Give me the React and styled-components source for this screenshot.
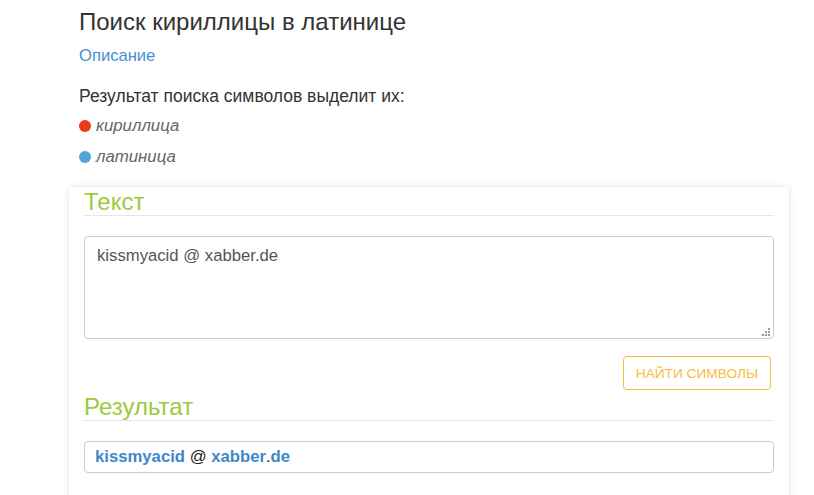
import React from "react";
import styled, { createGlobalStyle } from "styled-components";

const GlobalStyle = createGlobalStyle`
  body {
    margin: 0;
    background: #fff;
    font-family: "Liberation Sans", Arial, sans-serif;
    color: #333;
  }
`;

const App = () => {
  const result = [
    { text: "kissmyacid", latin: true },
    { text: " @ " },
    { text: "xabber", latin: true },
    { text: "." },
    { text: "de", latin: true },
  ];

  return (
    <Page>
      <GlobalStyle />
      <Intro>
        <Title>Поиск кириллицы в латинице</Title>
        <DescLink href="#">Описание</DescLink>
        <Lead>Результат поиска символов выделит их:</Lead>
        <Legend>
          <LegendItem>
            <Dot color="#ea3a1c" />
            кириллица
          </LegendItem>
          <LegendItem>
            <Dot color="#4fa4dd" />
            латиница
          </LegendItem>
        </Legend>
      </Intro>

      <Card>
        <SectionTitle>Текст</SectionTitle>
        <TextWrap>
          <TextArea defaultValue="kissmyacid @ xabber.de" />
        </TextWrap>
        <Actions>
          <FindButton>Найти символы</FindButton>
        </Actions>
        <SectionTitle>Результат</SectionTitle>
        <ResultBox>
          {result.map((part, i) =>
            part.latin ? <Latin key={i}>{part.text}</Latin> : <span key={i}>{part.text}</span>
          )}
        </ResultBox>
      </Card>
    </Page>
  );
};

const Page = styled.div`
  width: 720px;
  margin-left: 69px;
`;

const Intro = styled.div`
  padding: 8px 10px 0;
`;

const Title = styled.h1`
  margin: 0;
  font-size: 24px;
  font-weight: 400;
  line-height: 28px;
  color: #333;
`;

const DescLink = styled.a`
  display: inline-block;
  margin-top: 10px;
  font-size: 16.6px;
  line-height: 20px;
  color: #4a8fd3;
  text-decoration: none;
`;

const Lead = styled.p`
  margin: 19px 0 0;
  font-size: 17.5px;
  line-height: 22px;
`;

const Legend = styled.ul`
  list-style: none;
  margin: 8px 0 0;
  padding: 0;
  display: flex;
  flex-direction: column;
  gap: 9px;
`;

const LegendItem = styled.li`
  display: flex;
  align-items: center;
  gap: 5px;
  font-size: 16.8px;
  line-height: 22px;
  font-style: italic;
  color: #666;
`;

const Dot = styled.span`
  width: 12px;
  height: 12px;
  border-radius: 50%;
  background: ${(p) => p.color};
`;

const Card = styled.div`
  margin-top: 19px;
  background: #fff;
  padding: 0 15px 30px;
  box-shadow: 0 0 6px rgba(0, 0, 0, 0.12);
`;

const SectionTitle = styled.h2`
  margin: 0 0 20px;
  padding-top: 1px;
  font-size: 24px;
  font-weight: 400;
  line-height: 27px;
  color: #9dc93c;
  border-bottom: 1px solid #e5e5e5;
`;

const TextWrap = styled.div`
  position: relative;

  &::after {
    content: "";
    position: absolute;
    right: 4px;
    bottom: 3px;
    width: 8px;
    height: 8px;
    pointer-events: none;
    background:
      linear-gradient(#999, #999) 6px 0 / 2px 2px no-repeat,
      linear-gradient(#999, #999) 3px 3px / 2px 2px no-repeat,
      linear-gradient(#999, #999) 6px 3px / 2px 2px no-repeat,
      linear-gradient(#999, #999) 0 6px / 2px 2px no-repeat,
      linear-gradient(#999, #999) 3px 6px / 2px 2px no-repeat,
      linear-gradient(#999, #999) 6px 6px / 2px 2px no-repeat;
  }
`;

const TextArea = styled.textarea`
  display: block;
  box-sizing: border-box;
  width: 100%;
  height: 103px;
  padding: 8px 12px;
  border: 1px solid #ccc;
  border-radius: 4px;
  font-family: "Liberation Sans", Arial, sans-serif;
  font-size: 16.7px;
  line-height: 22px;
  color: #555;
  resize: none;
  outline: none;
`;

const Actions = styled.div`
  display: flex;
  justify-content: flex-end;
  padding: 17px 3px 2px 0;
`;

const FindButton = styled.button`
  height: 34px;
  padding: 0 12px;
  background: #fff;
  border: 1px solid #f6bb42;
  border-radius: 4px;
  color: #f6bb42;
  font-family: "Liberation Sans", Arial, sans-serif;
  font-size: 13.7px;
  text-transform: uppercase;
  cursor: pointer;
`;

const ResultBox = styled.div`
  box-sizing: border-box;
  height: 32px;
  padding: 0 10px;
  display: flex;
  align-items: center;
  white-space: pre;
  border: 1px solid #ccc;
  border-radius: 4px;
  font-size: 16.7px;
  color: #222;
`;

const Latin = styled.b`
  color: #3d88cb;
`;

export default App;
